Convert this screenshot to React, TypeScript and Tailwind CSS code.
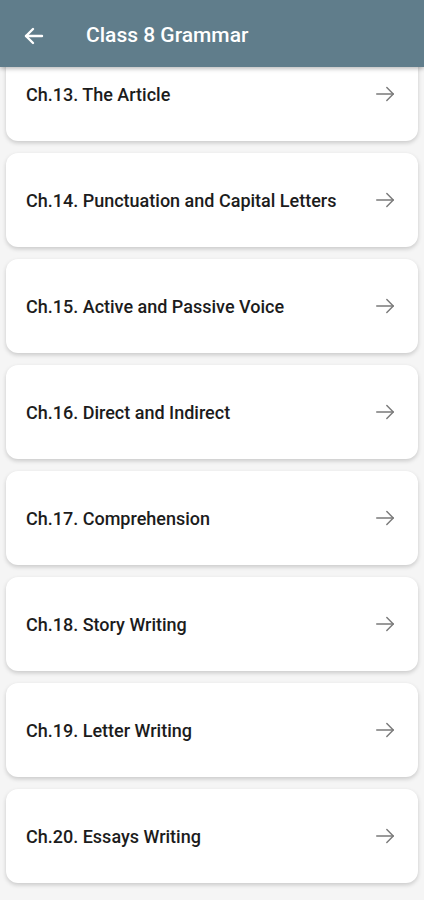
import React from 'react';

const chapters = [
  'Ch.13. The Article',
  'Ch.14. Punctuation and Capital Letters',
  'Ch.15. Active and Passive Voice',
  'Ch.16. Direct and Indirect',
  'Ch.17. Comprehension',
  'Ch.18. Story Writing',
  'Ch.19. Letter Writing',
  'Ch.20. Essays Writing',
];

const ArrowRight = () => (
  <svg width="22" height="22" viewBox="0 0 24 24" fill="none" stroke="#7a7a7a" strokeWidth="1.6" strokeLinecap="round" strokeLinejoin="round">
    <path d="M3 12h18" />
    <path d="M14 5l7 7-7 7" />
  </svg>
);

const ArrowLeft = () => (
  <svg width="24" height="24" viewBox="0 0 24 24" fill="none" stroke="#ffffff" strokeWidth="2.4" strokeLinecap="round" strokeLinejoin="round">
    <path d="M20 12H4" />
    <path d="M11 5l-7 7 7 7" />
  </svg>
);

export default function App() {
  return (
    <div className="relative h-[900px] w-[424px] overflow-hidden bg-[#f5f5f5] font-['Roboto',sans-serif]">
      <div className="absolute inset-x-0 top-0 z-10 flex h-[67px] items-center bg-[#607d8b] pt-1 shadow-[0_2px_4px_rgba(0,0,0,0.25)]">
        <div className="ml-[22px] flex h-6 w-6 items-center justify-center">
          <ArrowLeft />
        </div>
        <h1 className="ml-[40px] text-[21px] font-medium text-white">Class 8 Grammar</h1>
      </div>
      <div className="flex flex-col gap-3 px-[6px] pt-[47px]">
        {chapters.map((c) => (
          <div
            key={c}
            className="flex h-[94px] items-center justify-between rounded-xl bg-white pl-5 pr-[22px] shadow-[0_2px_4px_rgba(0,0,0,0.18)]"
          >
            <span className="text-[18px] font-medium text-[#1c1c1c]">{c}</span>
            <ArrowRight />
          </div>
        ))}
      </div>
    </div>
  );
}
